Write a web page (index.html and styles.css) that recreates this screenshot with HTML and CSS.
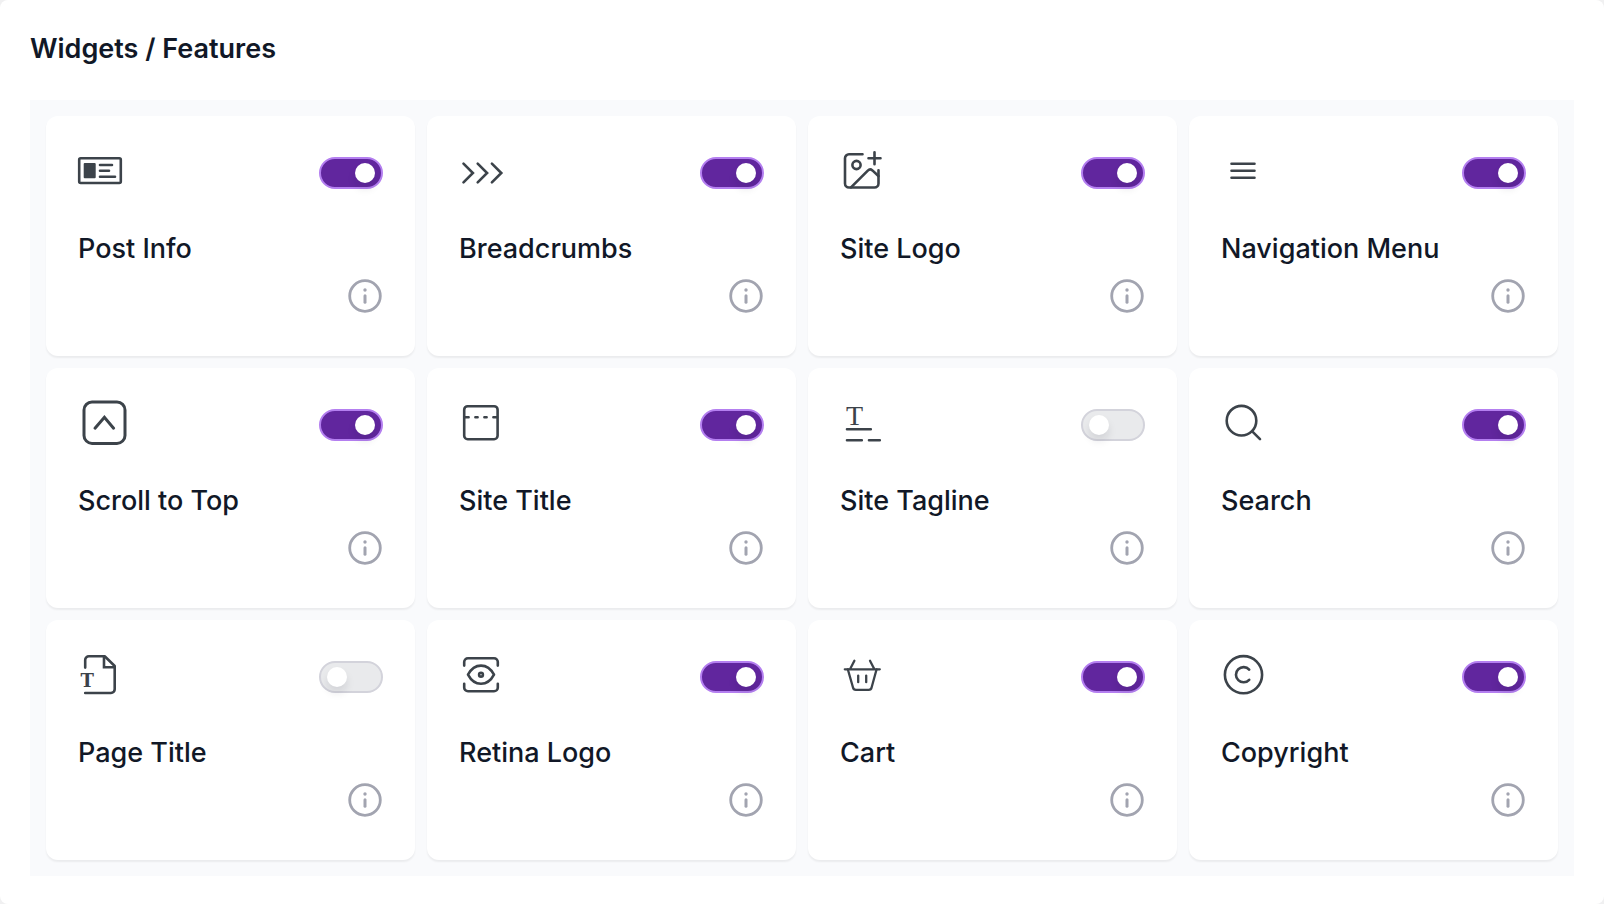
FILE: index.html
```html
<!DOCTYPE html>
<html lang="en">
<head>
    <meta charset="UTF-8">
    <meta name="viewport" content="width=device-width, initial-scale=1.0">
    <title>Widgets / Features</title>
    <link rel="stylesheet" href="styles.css">
</head>
<body>
    <!-- Shared info icon -->
    <svg class="sprite" aria-hidden="true">
        <symbol id="info" viewBox="0 0 36 36">
            <circle cx="18" cy="18" r="15.3" fill="none" stroke="currentColor" stroke-width="2.8"/>
            <circle cx="18" cy="12" r="1.7" fill="currentColor"/>
            <path d="M18 17.8v6.4" fill="none" stroke="currentColor" stroke-width="3" stroke-linecap="round"/>
        </symbol>
    </svg>

    <main class="page">
        <h1 class="title">Widgets / Features</h1>

        <div class="grid">
            <section class="card">
                <div class="card-top">
                    <svg class="icon" viewBox="0 0 44 46" aria-hidden="true">
                        <rect x="1.2" y="10.2" width="41.6" height="24.8" rx="1.5"/>
                        <rect class="solid" x="5.7" y="15" width="12" height="15.3" rx="1"/>
                        <path d="M22 17h12M22 22.7h9M22 28.7h15"/>
                    </svg>
                    <input class="toggle" type="checkbox" id="post-info" checked>
                </div>
                <label class="name" for="post-info">Post Info</label>
                <button class="info" type="button" aria-label="About Post Info"><svg><use href="#info"/></svg></button>
            </section>

            <section class="card">
                <div class="card-top">
                    <svg class="icon" viewBox="0 0 44 46" aria-hidden="true">
                        <path class="sharp" d="M4.5 15.6l9.4 9.4-9.4 9.4M18.7 15.6l9.4 9.4-9.4 9.4M32.9 15.6l9.4 9.4-9.4 9.4"/>
                    </svg>
                    <input class="toggle" type="checkbox" id="breadcrumbs" checked>
                </div>
                <label class="name" for="breadcrumbs">Breadcrumbs</label>
                <button class="info" type="button" aria-label="About Breadcrumbs"><svg><use href="#info"/></svg></button>
            </section>

            <section class="card">
                <div class="card-top">
                    <svg class="icon" viewBox="0 0 44 46" aria-hidden="true">
                        <path d="M22.5 6.3H9a4 4 0 0 0-4 4v25.2a4 4 0 0 0 4 4h25.5a4 4 0 0 0 4-4V22.3"/>
                        <path d="M11 39.3l16.8-16.7q2.2-2.2 4.6-.2l6 5.6M34.5 4.3v12M28.5 10.2h12"/>
                        <circle cx="16.5" cy="17" r="4.1"/>
                    </svg>
                    <input class="toggle" type="checkbox" id="site-logo" checked>
                </div>
                <label class="name" for="site-logo">Site Logo</label>
                <button class="info" type="button" aria-label="About Site Logo"><svg><use href="#info"/></svg></button>
            </section>

            <section class="card">
                <div class="card-top">
                    <svg class="icon" viewBox="0 0 44 46" aria-hidden="true">
                        <path d="M10.500 15.700h23M10.500 22.700h23M10.500 29.700h23"/>
                    </svg>
                    <input class="toggle" type="checkbox" id="navigation-menu" checked>
                </div>
                <label class="name" for="navigation-menu">Navigation Menu</label>
                <button class="info" type="button" aria-label="About Navigation Menu"><svg><use href="#info"/></svg></button>
            </section>

            <section class="card">
                <div class="card-top">
                    <svg class="icon" viewBox="0 0 44 46" aria-hidden="true">
                        <rect class="bold" x="6" y="2" width="41" height="41.4" rx="8"/>
                        <path class="bold sharp" d="M17 28.2l9.4-11 9.2 11"/>
                    </svg>
                    <input class="toggle" type="checkbox" id="scroll-to-top" checked>
                </div>
                <label class="name" for="scroll-to-top">Scroll to Top</label>
                <button class="info" type="button" aria-label="About Scroll to Top"><svg><use href="#info"/></svg></button>
            </section>

            <section class="card">
                <div class="card-top">
                    <svg class="icon" viewBox="0 0 44 46" aria-hidden="true">
                        <rect x="5.2" y="6.2" width="33.4" height="33" rx="3.5"/>
                        <path d="M6 17.3h3.6M16.4 17.3h2.2M25.4 17.3h2.2M34.4 17.3h3.6"/>
                    </svg>
                    <input class="toggle" type="checkbox" id="site-title" checked>
                </div>
                <label class="name" for="site-title">Site Title</label>
                <button class="info" type="button" aria-label="About Site Title"><svg><use href="#info"/></svg></button>
            </section>

            <section class="card">
                <div class="card-top">
                    <svg class="icon" viewBox="0 0 44 46" aria-hidden="true">
                        <text class="serif" x="6" y="25">T</text>
                        <path d="M7 29.3h23.8M7 40.3h14.8M29 40.3h10.8"/>
                    </svg>
                    <input class="toggle" type="checkbox" id="site-tagline">
                </div>
                <label class="name" for="site-tagline">Site Tagline</label>
                <button class="info" type="button" aria-label="About Site Tagline"><svg><use href="#info"/></svg></button>
            </section>

            <section class="card">
                <div class="card-top">
                    <svg class="icon" viewBox="0 0 44 46" aria-hidden="true">
                        <circle cx="20.5" cy="20.7" r="14.8"/>
                        <path d="M31.2 31.4l7.8 7.8"/>
                    </svg>
                    <input class="toggle" type="checkbox" id="search" checked>
                </div>
                <label class="name" for="search">Search</label>
                <button class="info" type="button" aria-label="About Search"><svg><use href="#info"/></svg></button>
            </section>

            <section class="card">
                <div class="card-top">
                    <svg class="icon" viewBox="0 0 44 46" aria-hidden="true">
                        <path d="M7.2 15.6V8a3.7 3.7 0 0 1 3.7-3.7h15.8l10 9.7v23.3a3.7 3.7 0 0 1-3.7 3.7H7.2"/>
                        <path class="sharp" d="M26 5v10.3h10.6"/>
                        <text class="slab" x="2.5" y="34.6">T</text>
                    </svg>
                    <input class="toggle" type="checkbox" id="page-title">
                </div>
                <label class="name" for="page-title">Page Title</label>
                <button class="info" type="button" aria-label="About Page Title"><svg><use href="#info"/></svg></button>
            </section>

            <section class="card">
                <div class="card-top">
                    <svg class="icon" viewBox="0 0 44 46" aria-hidden="true">
                        <path d="M5.2 13.6V10A3.8 3.8 0 0 1 9 6.2h26A3.8 3.8 0 0 1 38.8 10v3.6M5.2 31.8v3.6A3.8 3.8 0 0 0 9 39.2h26a3.8 3.8 0 0 0 3.8-3.8v-3.6"/>
                        <path d="M9 22.7C12 17 16.4 13.6 22 13.6s10 3.4 13 9.1c-3 5.7-7.4 9.1-13 9.1S12 28.4 9 22.7z"/>
                        <circle cx="22" cy="22.7" r="1.9"/>
                    </svg>
                    <input class="toggle" type="checkbox" id="retina-logo" checked>
                </div>
                <label class="name" for="retina-logo">Retina Logo</label>
                <button class="info" type="button" aria-label="About Retina Logo"><svg><use href="#info"/></svg></button>
            </section>

            <section class="card">
                <div class="card-top">
                    <svg class="icon" viewBox="0 0 44 46" aria-hidden="true">
                        <path class="thin" d="M4.8 17.3h35M14.4 8.8L10 17.3M30 8.8l4.4 8.5"/>
                        <path class="thin" d="M7.8 17.3L13 35.5a3 3 0 0 0 3 2.4h12.6a3 3 0 0 0 3-2.4l5-18.2M18.2 23.6v6.6M26.2 23.6v6.6"/>
                    </svg>
                    <input class="toggle" type="checkbox" id="cart" checked>
                </div>
                <label class="name" for="cart">Cart</label>
                <button class="info" type="button" aria-label="About Cart"><svg><use href="#info"/></svg></button>
            </section>

            <section class="card">
                <div class="card-top">
                    <svg class="icon" viewBox="0 0 44 46" aria-hidden="true">
                        <circle cx="22.5" cy="22.7" r="18.6"/>
                        <path d="M28.2 17.6a7.6 7.6 0 1 0 0 10.2"/>
                    </svg>
                    <input class="toggle" type="checkbox" id="copyright" checked>
                </div>
                <label class="name" for="copyright">Copyright</label>
                <button class="info" type="button" aria-label="About Copyright"><svg><use href="#info"/></svg></button>
            </section>
        </div>
    </main>
</body>
</html>
```
FILE: styles.css
```css
* {
    box-sizing: border-box;
}
body {
    margin: 0;
    background: #f0f0f1;
    color: #111827;
    font-family: Inter, "Liberation Sans", sans-serif;
    font-size: 27px;
    line-height: 34px;
}
.sprite {
    display: none;
}
.page {
    min-height: 100vh;
    padding: 32px 30px 28px;
    background: #fff;
    border-radius: 8px;
}
.title {
    margin: 0 0 34px;
    font-size: 27px;
    font-weight: 600;
    line-height: 34px;
}
.grid {
    display: grid;
    grid-template-columns: repeat(4, 1fr);
    gap: 12px;
    padding: 16px;
    background: #f9fafc;
}
.card {
    display: flex;
    flex-direction: column;
    align-items: flex-start;
    padding: 32px 32px 42px;
    background: #fff;
    border-radius: 12px;
    box-shadow: 0 2px 2px rgba(0, 0, 0, 0.06);
}
.card-top {
    display: flex;
    justify-content: space-between;
    align-self: stretch;
    height: 50px;
    margin-bottom: 34px;
}
.icon {
    width: 44px;
    height: 46px;
    overflow: visible;
    fill: none;
    stroke: #3c434a;
    stroke-width: 2.6;
    stroke-linecap: round;
    stroke-linejoin: round;
}
.icon .solid {
    fill: #3c434a;
    stroke: none;
}
.icon .bold {
    stroke-width: 3;
}
.icon .thin {
    stroke-width: 2.3;
}
.icon .sharp {
    stroke-linejoin: miter;
}
.icon text {
    fill: #3c434a;
    stroke: none;
}
.serif {
    font-family: "Liberation Serif", serif;
    font-size: 28px;
}
.slab {
    font-family: "DejaVu Serif", serif;
    font-size: 18px;
    font-weight: bold;
}
.name {
    margin-bottom: 12px;
    font-weight: 500;
}

/* Toggle switch */
.toggle {
    appearance: none;
    display: flex;
    align-items: center;
    align-self: center;
    width: 64px;
    height: 32px;
    margin: 0;
    padding: 0 6px;
    border: 2px solid #d3d3db;
    border-radius: 16px;
    background: #e9eaec;
    cursor: pointer;
}
.toggle::before {
    content: "";
    width: 20px;
    height: 20px;
    border-radius: 50%;
    background: #fff;
    box-shadow: 0 6px 8px rgba(17, 24, 39, 0.1);
}
.toggle:checked {
    justify-content: flex-end;
    border-color: #b47ff0;
    background: #61269e;
}

.info {
    align-self: flex-end;
    width: 36px;
    height: 36px;
    padding: 0;
    border: none;
    background: none;
    color: #a2a4b0;
    cursor: pointer;
}
.info svg {
    display: block;
    width: 36px;
    height: 36px;
}
```
